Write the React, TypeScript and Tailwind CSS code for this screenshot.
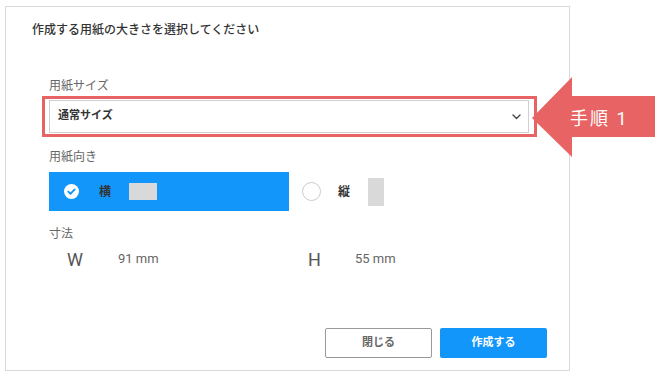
import React from "react";

const font = { fontFamily: '"Roboto", "Noto Sans CJK JP", sans-serif' };

function CheckCircle() {
  return (
    <svg width="15" height="15" viewBox="0 0 16 16">
      <circle cx="8" cy="8" r="8" fill="#ffffff" />
      <path
        d="M4.6 8.2l2.3 2.2 4.5-4.6"
        fill="none"
        stroke="#1296fa"
        strokeWidth="2"
        strokeLinecap="round"
        strokeLinejoin="round"
      />
    </svg>
  );
}

function Chevron() {
  return (
    <svg width="9" height="6" viewBox="0 0 9 6">
      <path d="M1 1l3.5 3.5L8 1" fill="none" stroke="#444" strokeWidth="1.4" strokeLinecap="round" strokeLinejoin="round" />
    </svg>
  );
}

export default function App() {
  return (
    <div className="relative w-[655px] h-[375px] bg-white pl-[5px] pt-[6px]" style={font}>
      <div className="w-[565px] h-[365px] border border-[#d9d9d9] flex flex-col">
        <div className="px-[26px] pt-[14px] text-[12px] leading-[18px] font-medium text-[#333]">
          作成する用紙の大きさを選択してください
        </div>

        <div className="pl-[43px] pr-[40px] mt-[38px] flex flex-col">
          <div className="text-[12px] leading-[18px] text-[#666]">用紙サイズ</div>
          <div className="mt-[5px] h-[33px] border border-[#cfcfcf] flex items-center justify-between pl-[8px] pr-[7px]">
            <span className="text-[11px] font-semibold text-[#333]">通常サイズ</span>
            <Chevron />
          </div>

          <div className="mt-[15px] text-[12px] leading-[18px] text-[#666]">用紙向き</div>
          <div className="mt-[6px] flex h-[39px]">
            <div className="w-[240px] bg-[#1296fa] flex items-center pl-[15px]">
              <CheckCircle />
              <span className="ml-[20px] text-[12px] font-semibold text-[#333]">横</span>
              <div className="ml-[18px] w-[28px] h-[17px] bg-[#d9d9d9]" />
            </div>
            <div className="flex items-center pl-[13px]">
              <div className="w-[19px] h-[19px] rounded-full border-[1.5px] border-[#cccccc]" />
              <span className="ml-[17px] text-[12px] font-semibold text-[#333]">縦</span>
              <div className="ml-[18px] w-[16px] h-[28px] bg-[#d9d9d9]" />
            </div>
          </div>

          <div className="mt-[14px] text-[12px] leading-[18px] text-[#666]">寸法</div>
          <div className="mt-[4px] flex h-[24px] items-center">
            <div className="w-[241px] flex items-center pl-[18px]">
              <span className="w-[51px] text-[18px] text-[#555]">W</span>
              <span className="text-[13px] text-[#666]">91 mm</span>
            </div>
            <div className="flex items-center pl-[18px]">
              <span className="w-[47px] text-[18px] text-[#555]">H</span>
              <span className="text-[13px] text-[#666]">55 mm</span>
            </div>
          </div>
        </div>

        <div className="mt-auto flex justify-end gap-[8px] pr-[22px] pb-[12px]">
          <button className="w-[107px] h-[30px] border border-[#999] rounded-[2px] bg-white text-[11px] font-bold text-[#666]">
            閉じる
          </button>
          <button className="w-[107px] h-[30px] rounded-[2px] bg-[#1296fa] text-[11px] font-bold text-white">
            作成する
          </button>
        </div>
      </div>

      {/* annotation overlays */}
      <div className="absolute left-[42px] top-[96px] w-[495px] h-[41px] border-[3px] border-[#e86464]" />
      <svg className="absolute left-[530px] top-[76px]" width="125" height="82" viewBox="0 0 125 82">
        <polygon points="2,42 42,1 42,20 125,20 125,61 42,61 42,81" fill="#e86464" />
      </svg>
      <div className="absolute left-[570px] top-[105px] h-[26px] flex items-center text-[18px] text-white tracking-[2px]">
        手順 1
      </div>
    </div>
  );
}
